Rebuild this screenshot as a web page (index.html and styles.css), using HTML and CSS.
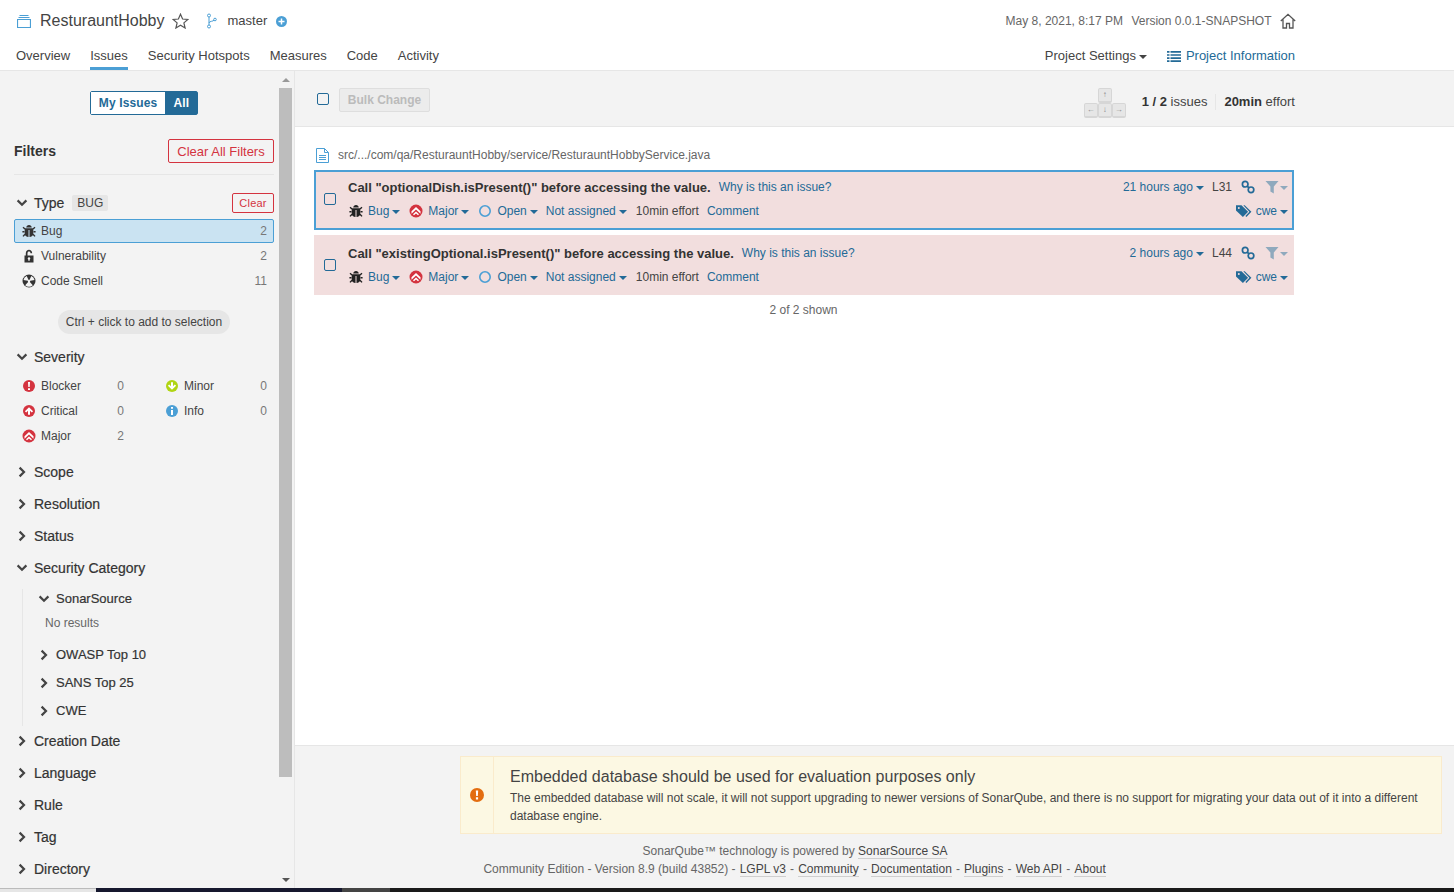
FILE: index.html
```html
<!DOCTYPE html>
<html lang="en">
<head>
<meta charset="utf-8">
<title>ResturauntHobby</title>
<link rel="stylesheet" href="styles.css">
</head>
<body>
<svg class="defs" width="0" height="0" aria-hidden="true">
  <defs>
    <symbol id="bug" viewBox="0 0 14 14"><path d="M4.200 3.400C4.400 1.900 5.500 1 7 1s2.600.9 2.800 2.400zM3.600 4.300h6.800c.5 0 .9.4.9.9v4.600C11.300 11.600 9.600 13 7.500 13V6h-1v7c-2.100 0-3.800-1.400-3.800-3.200V5.200c0-.5.4-.9.9-.9z" fill="currentColor"/><path d="M3 5 1 3.200M11 5l2-1.800M2.500 7.700H.4M11.500 7.700h2.100M3 10.200 1 12.400M11 10.200l2 2.200" stroke="currentColor" stroke-width="1.400" fill="none"/></symbol>
    <symbol id="major" viewBox="0 0 14 14"><circle cx="7" cy="7" r="6.500" fill="#d4333f"/><path d="M2.500 7.300 7 3l4.500 4.300v2.400L7 5.600 2.500 9.700z" fill="#fff"/><path d="M4 10.300 7 7.500l3 2.800-1 1L7 9.500l-2 1.800z" fill="#fff"/></symbol>
    <symbol id="caret" viewBox="0 0 8 4"><path d="M0 0h8L4 4z" fill="currentColor"/></symbol>
    <symbol id="open" viewBox="0 0 14 14"><circle cx="7" cy="7" r="5.200" fill="none" stroke="#4b9fd5" stroke-width="1.600"/></symbol>
    <symbol id="chev-d" viewBox="0 0 12 12"><path d="M1.600 3.400 6 7.800l4.400-4.400" fill="none" stroke="currentColor" stroke-width="2.200"/></symbol>
    <symbol id="chev-r" viewBox="0 0 12 12"><path d="M3.600 1.600 8 6l-4.400 4.400" fill="none" stroke="currentColor" stroke-width="2.200"/></symbol>
    <symbol id="link" viewBox="0 0 14 14"><g fill="none" stroke="#236a97" stroke-width="1.700"><circle cx="4.200" cy="4.200" r="2.800"/><circle cx="10" cy="9.800" r="2.800"/><path d="M6 6l2.200 2"/></g></symbol>
    <symbol id="filter" viewBox="0 0 14 14"><path d="M.5 1h13L8.800 6.600V13.500l-3.400-2V6.600z" fill="#8fa9bd"/></symbol>
    <symbol id="tag" viewBox="0 0 16 14"><path d="M0 1.300h5.500l6.600 6.500-5.200 5.200L0 6.600z" fill="#236a97"/><path d="M7.300 1.300h1.400l6.700 6.500-5 5.200-1-1 4-4.200z" fill="#236a97"/><circle cx="2.800" cy="4" r="1" fill="#f2dede"/></symbol>
  </defs>
</svg>

<header class="topbar">
  <div class="bar-row bar-main">
    <div class="crumbs">
      <svg class="ico-project" width="14" height="13" viewBox="0 0 14 13"><path d="M2.500.5h9M1.500 2.500h11M.5 4.500h13v8H.5z" fill="none" stroke="#4b9fd5" stroke-width="1.200"/></svg>
      <span class="project-name">ResturauntHobby</span>
      <svg class="ico-star" width="17" height="16" viewBox="0 0 17 16"><path d="M8.500 1.200 10.600 6l5.200.5-3.900 3.400 1.200 5.100-4.600-2.700L3.900 15l1.200-5.100L1.200 6.500l5.200-.5z" fill="none" stroke="#555" stroke-width="1.200"/></svg>
      <svg class="ico-branch" width="12" height="16" viewBox="0 0 12 16"><g fill="none" stroke="#4b9fd5"><circle cx="3" cy="2.500" r="1.500"/><circle cx="3" cy="13.500" r="1.500"/><circle cx="9" cy="6.500" r="1.300"/><path d="M3 4v8M3 10c0-2 4.500-1.500 5-2.800"/></g></svg>
      <span class="branch">master</span>
      <svg class="ico-plus" width="11" height="11" viewBox="0 0 11 11"><circle cx="5.500" cy="5.500" r="5.500" fill="#4b9fd5"/><path d="M2.500 5.500h6M5.500 2.500v6" stroke="#fff" stroke-width="1.500"/></svg>
    </div>
    <div class="meta">
      <span>May 8, 2021, 8:17 PM</span>
      <span>Version 0.0.1-SNAPSHOT</span>
      <svg class="ico-home" width="16" height="16" viewBox="0 0 16 16"><path d="M.8 8 8 1.300 15.200 8M3 6.500V15h3.500v-4.500h3V15H13V6.500" fill="none" stroke="#555" stroke-width="1.300"/></svg>
    </div>
  </div>
  <nav class="bar-row bar-nav">
    <div class="tabs">
      <a class="tab">Overview</a>
      <a class="tab is-active">Issues</a>
      <a class="tab">Security Hotspots</a>
      <a class="tab">Measures</a>
      <a class="tab">Code</a>
      <a class="tab">Activity</a>
    </div>
    <div class="nav-right">
      <a class="settings">Project Settings<svg class="caret" width="8" height="4"><use href="#caret"/></svg></a>
      <a class="info"><svg width="14" height="11" viewBox="0 0 14 11"><path d="M0 .9h2.500M3.500 .9H14M0 4h2.500M3.500 4H14M0 7.100h2.500M3.500 7.100H14M0 10.200h2.500M3.500 10.200H14" stroke="#236a97" stroke-width="1.700"/></svg>Project Information</a>
    </div>
  </nav>
</header>

<div class="layout">
  <aside class="sidebar">
    <div class="side-scroll">
      <div class="toggle-wrap"><div class="toggle"><span class="toggle-off">My Issues</span><span class="toggle-on">All</span></div></div>
      <div class="filters-head"><h2>Filters</h2><button class="btn-red btn-big">Clear All Filters</button></div>

      <section class="facet facet-type">
        <div class="facet-head"><svg class="chev"><use href="#chev-d"/></svg><span class="facet-title">Type</span><span class="pill">BUG</span><button class="btn-red btn-small">Clear</button></div>
        <div class="row is-selected"><svg class="row-ico" width="14" height="14"><use href="#bug"/></svg><span class="row-label">Bug</span><span class="row-count">2</span></div>
        <div class="row"><svg class="row-ico" width="14" height="14" viewBox="0 0 14 14"><path d="M2.500 6.500h9v7h-9zM3.800 6.500V4.300C3.800 2 5.300.8 7 .8s3.200 1.200 3.200 3.500H8.500C8.500 3 7.800 2.500 7 2.500S5.500 3 5.500 4.300v2.200z" fill="#333"/><circle cx="7" cy="9.500" r="1.200" fill="#f3f3f3"/><path d="M6.500 10h1v2h-1z" fill="#f3f3f3"/></svg><span class="row-label">Vulnerability</span><span class="row-count">2</span></div>
        <div class="row"><svg class="row-ico" width="14" height="14" viewBox="0 0 14 14"><circle cx="7" cy="7" r="6.500" fill="#333"/><path d="M7 7 3.200 2.800A5.500 5.500 0 0 1 10.800 2.800zM7 7l-5.500 1a5.500 5.500 0 0 0 3.200 3.900zM7 7l5.500 1a5.500 5.500 0 0 1-3.200 3.900z" fill="#f3f3f3" transform="rotate(180 7 7)"/><circle cx="7" cy="7" r="1.200" fill="#f3f3f3"/></svg><span class="row-label">Code Smell</span><span class="row-count">11</span></div>
        <div class="hint-wrap"><span class="hint">Ctrl + click to add to selection</span></div>
      </section>

      <section class="facet">
        <div class="facet-head"><svg class="chev"><use href="#chev-d"/></svg><span class="facet-title">Severity</span></div>
        <div class="sev-grid">
          <div class="row"><svg class="row-ico" width="14" height="14" viewBox="0 0 14 14"><circle cx="7" cy="7" r="6" fill="#d4333f"/><path d="M6 3h2l-.3 5H6.300zM6 9.200h2V11H6z" fill="#fff"/></svg><span class="row-label">Blocker</span><span class="row-count">0</span></div>
          <div class="row"><svg class="row-ico" width="14" height="14" viewBox="0 0 14 14"><circle cx="7" cy="7" r="6" fill="#b0d513"/><path d="M7 10.800 2.900 6.700l1.300-1.300L6 7.200V3.200h2v4l1.800-1.800 1.300 1.300z" fill="#fff"/></svg><span class="row-label">Minor</span><span class="row-count">0</span></div>
          <div class="row"><svg class="row-ico" width="14" height="14" viewBox="0 0 14 14"><circle cx="7" cy="7" r="6" fill="#d4333f"/><path d="M7 3.200 2.900 7.300l1.300 1.300L6 6.800v4h2v-4l1.800 1.800 1.300-1.300z" fill="#fff"/></svg><span class="row-label">Critical</span><span class="row-count">0</span></div>
          <div class="row"><svg class="row-ico" width="14" height="14" viewBox="0 0 14 14"><circle cx="7" cy="7" r="6" fill="#4b9fd5"/><path d="M6 3h2v1.800H6zM6 6h2v5H6z" fill="#fff"/></svg><span class="row-label">Info</span><span class="row-count">0</span></div>
          <div class="row"><svg class="row-ico" width="14" height="14"><use href="#major"/></svg><span class="row-label">Major</span><span class="row-count">2</span></div>
        </div>
      </section>

      <section class="facet-closed"><svg class="chev"><use href="#chev-r"/></svg><span class="facet-title">Scope</span></section>
      <section class="facet-closed"><svg class="chev"><use href="#chev-r"/></svg><span class="facet-title">Resolution</span></section>
      <section class="facet-closed"><svg class="chev"><use href="#chev-r"/></svg><span class="facet-title">Status</span></section>

      <section class="facet-sec">
        <div class="facet-closed"><svg class="chev"><use href="#chev-d"/></svg><span class="facet-title">Security Category</span></div>
        <div class="sub-list">
          <div class="sub-head"><svg class="chev"><use href="#chev-d"/></svg><span class="facet-title">SonarSource</span></div>
          <div class="no-results">No results</div>
          <div class="sub-head"><svg class="chev"><use href="#chev-r"/></svg><span class="facet-title">OWASP Top 10</span></div>
          <div class="sub-head"><svg class="chev"><use href="#chev-r"/></svg><span class="facet-title">SANS Top 25</span></div>
          <div class="sub-head"><svg class="chev"><use href="#chev-r"/></svg><span class="facet-title">CWE</span></div>
        </div>
      </section>

      <section class="facet-closed"><svg class="chev"><use href="#chev-r"/></svg><span class="facet-title">Creation Date</span></section>
      <section class="facet-closed"><svg class="chev"><use href="#chev-r"/></svg><span class="facet-title">Language</span></section>
      <section class="facet-closed"><svg class="chev"><use href="#chev-r"/></svg><span class="facet-title">Rule</span></section>
      <section class="facet-closed"><svg class="chev"><use href="#chev-r"/></svg><span class="facet-title">Tag</span></section>
      <section class="facet-closed"><svg class="chev"><use href="#chev-r"/></svg><span class="facet-title">Directory</span></section>
    </div>
    <div class="scrollbar"><span class="sb-up"></span><span class="sb-thumb"></span><span class="sb-down"></span></div>
  </aside>

  <main class="main">
    <div class="toolbar">
      <span class="check check-tool"></span>
      <button class="bulk">Bulk Change</button>
      <div class="toolbar-right">
        <div class="keys">
          <span class="key key-up">↑</span>
          <span class="key-row"><span class="key">←</span><span class="key">↓</span><span class="key">→</span></span>
        </div>
        <span class="paging"><b>1 / 2</b> issues</span>
        <span class="effort"><b>20min</b> effort</span>
      </div>
    </div>

    <div class="content">
      <div class="file-line">
        <svg width="13" height="15" viewBox="0 0 13 15"><path d="M.5.500h8l4 4v10H.500zM8.500.500v4h4M3 7.500h7M3 9.500h7M3 11.500h7" fill="none" stroke="#4b9fd5"/></svg>
        <span>src/.../com/qa/ResturauntHobby/service/ResturauntHobbyService.java</span>
      </div>

      <article class="issue is-current">
        <span class="check"></span>
        <div class="issue-body">
          <div class="issue-line">
            <span class="msg">Call "optionalDish.isPresent()" before accessing the value.</span>
            <a class="why">Why is this an issue?</a>
            <span class="issue-right">
              <a class="ago">21 hours ago<svg class="caret" width="8" height="4"><use href="#caret"/></svg></a>
              <span class="lnum">L31</span>
              <svg class="i-link" width="14" height="14"><use href="#link"/></svg>
              <span class="filt"><svg width="14" height="14"><use href="#filter"/></svg><svg class="caret caret-pale" width="8" height="4"><use href="#caret"/></svg></span>
            </span>
          </div>
          <div class="issue-line line-two">
            <span class="attr"><svg class="attr-bug" width="14" height="14"><use href="#bug"/></svg><a>Bug<svg class="caret" width="8" height="4"><use href="#caret"/></svg></a></span>
            <span class="attr"><svg width="14" height="14"><use href="#major"/></svg><a>Major<svg class="caret" width="8" height="4"><use href="#caret"/></svg></a></span>
            <span class="attr attr-o"><svg width="14" height="14"><use href="#open"/></svg><a>Open<svg class="caret" width="8" height="4"><use href="#caret"/></svg></a></span>
            <span class="attr"><a>Not assigned<svg class="caret" width="8" height="4"><use href="#caret"/></svg></a></span>
            <span class="attr plain">10min effort</span>
            <span class="attr"><a>Comment</a></span>
            <span class="issue-right"><svg width="16" height="14"><use href="#tag"/></svg><a class="cwe">cwe<svg class="caret" width="8" height="4"><use href="#caret"/></svg></a></span>
          </div>
        </div>
      </article>

      <article class="issue">
        <span class="check"></span>
        <div class="issue-body">
          <div class="issue-line">
            <span class="msg">Call "existingOptional.isPresent()" before accessing the value.</span>
            <a class="why">Why is this an issue?</a>
            <span class="issue-right">
              <a class="ago">2 hours ago<svg class="caret" width="8" height="4"><use href="#caret"/></svg></a>
              <span class="lnum">L44</span>
              <svg class="i-link" width="14" height="14"><use href="#link"/></svg>
              <span class="filt"><svg width="14" height="14"><use href="#filter"/></svg><svg class="caret caret-pale" width="8" height="4"><use href="#caret"/></svg></span>
            </span>
          </div>
          <div class="issue-line line-two">
            <span class="attr"><svg class="attr-bug" width="14" height="14"><use href="#bug"/></svg><a>Bug<svg class="caret" width="8" height="4"><use href="#caret"/></svg></a></span>
            <span class="attr"><svg width="14" height="14"><use href="#major"/></svg><a>Major<svg class="caret" width="8" height="4"><use href="#caret"/></svg></a></span>
            <span class="attr attr-o"><svg width="14" height="14"><use href="#open"/></svg><a>Open<svg class="caret" width="8" height="4"><use href="#caret"/></svg></a></span>
            <span class="attr"><a>Not assigned<svg class="caret" width="8" height="4"><use href="#caret"/></svg></a></span>
            <span class="attr plain">10min effort</span>
            <span class="attr"><a>Comment</a></span>
            <span class="issue-right"><svg width="16" height="14"><use href="#tag"/></svg><a class="cwe">cwe<svg class="caret" width="8" height="4"><use href="#caret"/></svg></a></span>
          </div>
        </div>
      </article>
      <div class="shown">2 of 2 shown</div>
    </div>

    <footer class="foot">
      <div class="warn">
        <div class="warn-ico"><svg width="14" height="14" viewBox="0 0 14 14"><circle cx="7" cy="7" r="7" fill="#e36d10"/><path d="M5.800 2.500h2.400l-.4 5.500H6.200zM5.900 9.300h2.200v2.200H5.900z" fill="#fff"/></svg></div>
        <div class="warn-text">
          <h3>Embedded database should be used for evaluation purposes only</h3>
          <p>The embedded database will not scale, it will not support upgrading to newer versions of SonarQube, and there is no support for migrating your data out of it into a different database engine.</p>
        </div>
      </div>
      <div class="foot-line foot-first">SonarQube™ technology is powered by <a>SonarSource SA</a></div>
      <div class="foot-line foot-links">Community Edition - Version 8.9 (build 43852) - <a>LGPL v3</a> - <a>Community</a> - <a>Documentation</a> - <a>Plugins</a> - <a>Web API</a> - <a>About</a></div>
    </footer>
  </main>
</div>

<div class="taskbar"><span class="tb-light"></span><span class="tb-a"></span><span class="tb-b"></span><span class="tb-c"></span></div>
</body>
</html>
```
FILE: styles.css
```css
* { box-sizing: border-box; }
html, body { margin: 0; height: 100%; overflow: hidden; }
body { width: 1454px; height: 892px; display: flex; flex-direction: column; font: 12px/16px "Liberation Sans", Arial, sans-serif; color: #444; background: #fff; }
.defs { position: absolute; }
a { color: inherit; }
button { font-family: inherit; }
svg { flex: none; display: block; }

.topbar { height: 71px; flex: none; background: #fff; border-bottom: 1px solid #e6e6e6; padding-right: 159px; padding-left: 16px; }
.bar-row { display: flex; align-items: center; justify-content: space-between; }
.bar-main { height: 42px; }
.crumbs { display: flex; align-items: center; }
.ico-project { margin-left: 1px; }
.project-name { font-size: 16px; color: #444; margin-left: 9px; }
.ico-star { margin-left: 7px; }
.ico-branch { margin-left: 17px; }
.branch { margin-left: 10px; font-size: 13px; color: #444; }
.ico-plus { margin-left: 9px; }
.meta { display: flex; align-items: center; gap: 8.5px; color: #666; margin-right: -1px; }
.bar-nav { height: 28px; align-items: stretch; }
.tabs { display: flex; gap: 20px; }
.tab { font-size: 13px; color: #444; padding-top: 6px; border-bottom: 3px solid transparent; height: 28px; }
.tab.is-active { border-bottom-color: #4b9fd5; }
.nav-right { display: flex; gap: 20px; padding-top: 6px; font-size: 13px; }
.settings { display: flex; align-items: center; height: 16px; }
.info { display: flex; align-items: center; gap: 5px; height: 16px; color: #236a97; }
.caret { margin-left: 3px; margin-top: 1px; display: inline-block; vertical-align: middle; }

.layout { flex: 1; min-height: 0; display: flex; }
.sidebar { width: 295px; flex: none; display: flex; background: #f3f3f3; border-right: 1px solid #e6e6e6; }
.side-scroll { width: 279px; padding: 20px 5px 0 14px; overflow: hidden; }
.scrollbar { width: 14px; display: flex; flex-direction: column; align-items: flex-start; }
.sb-up { margin: 7px 0 0 3px; border: 4px solid transparent; border-top: 0; border-bottom-color: #999; }
.sb-thumb { display: block; width: 13px; height: 689px; background: #bdbdbd; margin-top: 6px; }
.sb-down { margin: auto 0 6px 3px; border: 4px solid transparent; border-bottom: 0; border-top-color: #555; }

.toggle-wrap { display: flex; justify-content: center; }
.toggle { display: flex; height: 24px; border: 1px solid #236a97; border-radius: 2px; font-weight: 700; line-height: 22px; letter-spacing: .15px; }
.toggle-off { background: #fff; color: #236a97; padding: 0 8px; }
.toggle-on { background: #236a97; color: #fff; padding: 0 8px; }
.filters-head { display: flex; align-items: center; justify-content: space-between; margin-top: 24px; padding-bottom: 11px; border-bottom: 1px solid #e6e6e6; }
.filters-head h2 { margin: 0; font-size: 14px; line-height: 24px; font-weight: 700; color: #333; }
.btn-red { background: transparent; border: 1px solid #d4333f; border-radius: 2px; color: #d4333f; font-size: 12px; padding: 0; }
.btn-big { width: 106px; height: 24px; font-size: 13px; }
.btn-small { width: 42px; height: 20px; font-size: 11px; margin-left: auto; letter-spacing: .2px; }

.facet-type { margin-top: 18px; }
.facet-head { display: flex; align-items: center; height: 20px; }
.chev { width: 12px; height: 12px; margin: 0 6px 0 2px; color: #444; }
.facet-title { font-size: 14px; color: #333; -webkit-text-stroke: .2px #333; }
.pill { background: #e6e6e6; border-radius: 2px; font-size: 12px; line-height: 16px; padding: 0 5px; margin-left: 8px; color: #444; }
.row { display: flex; align-items: center; height: 24px; padding: 0 6px 0 7px; margin-top: 1px; border: 1px solid transparent; border-radius: 2px; }
.facet-head + .row { margin-top: 6px; }
.row.is-selected { background: #cae3f2; border-color: #4b9fd5; }
.row-ico { margin-right: 5px; color: #333; margin-left: 0; }
.row-label { flex: 1; }
.row-count { color: #777; }
.hint-wrap { display: flex; justify-content: center; margin-top: 17px; }
.hint { background: #e6e6e6; border-radius: 12px; padding: 0 8px; line-height: 24px; }
.facet-type + .facet { margin-top: 13px; }
.sev-grid { display: grid; grid-template-columns: 117px 117px; column-gap: 26px; margin-top: 6px; }
.facet-closed { display: flex; align-items: center; height: 20px; margin-top: 12px; }
.facet + .facet-closed { margin-top: 14px; }
.facet-sec > .facet-closed { margin-top: 12px; }
.facet-sec + .facet-closed { margin-top: 5px; }
.sub-list { margin: 11px 0 0 8px; border-left: 1px solid #e6e6e6; padding: 0 0 5px 13px; }
.sub-head { display: flex; align-items: center; height: 20px; }
.sub-head + .sub-head { margin-top: 8px; }
.sub-head .chev { margin-right: 6px; }
.sub-head .facet-title { font-size: 13px; }
.no-results { margin: 6px 0 14px 9px; color: #666; line-height: 16px; }

.main { flex: 1; min-width: 0; display: flex; flex-direction: column; }
.toolbar { height: 56px; flex: none; background: #f3f3f3; border-bottom: 1px solid #e6e6e6; display: flex; align-items: flex-start; padding: 17px 159px 0 22px; }
.check { display: block; flex: none; width: 12px; height: 12px; border: 1px solid #236a97; border-radius: 2px; background: transparent; }
.check-tool { margin-top: 5px; }
.bulk { margin-left: 10px; width: 91px; height: 24px; background: #ececec; border: 1px solid #dedede; border-radius: 2px; color: #bbb; font-size: 12px; font-weight: 700; padding: 0; }
.toolbar-right { margin-left: auto; display: flex; align-items: flex-start; }
.keys { display: flex; flex-direction: column; align-items: center; margin-right: 16px; }
.key { width: 14px; height: 15px; background: #e6e6e6; border: 1px solid #d6d6d6; border-bottom-width: 2px; border-radius: 2px; font-size: 8px; line-height: 11px; color: #888; text-align: center; display: block; }
.key-row { display: flex; }
.paging { margin-top: 6px; padding-right: 8px; font-size: 13px; color: #444; border-right: 1px solid #e6e6e6; line-height: 16px; }
.paging b, .effort b { color: #333; }
.effort { margin-top: 6px; margin-left: 8px; font-size: 13px; }

.content { flex: 1; background: #fff; padding: 20px 160px 0 19px; }
.file-line { display: flex; align-items: center; gap: 9px; padding-left: 2px; height: 16px; color: #666; }
.issue { display: flex; align-items: center; height: 60px; margin-top: 6px; background: #f2dede; padding-left: 10px; color: #444; }
.is-current { border: 2px solid #4b9fd5; padding-left: 8px; padding-bottom: 2px; margin-top: 7px; }
.is-current + .issue { margin-top: 5px; }
.issue > .check { width: 12px; height: 12px; }
.issue-body { flex: 1; min-width: 0; margin-left: 12px; padding-right: 6px; }
.is-current .issue-body { padding-right: 4px; }
.issue-line { display: flex; align-items: center; height: 16px; }
.line-two { margin-top: 8px; }
.msg { font-size: 13px; font-weight: 700; color: #333; padding-top: 2px; }
.why { margin-left: 8px; color: #236a97; }
.issue-right { margin-left: auto; display: flex; align-items: center; color: #236a97; }
.attr { display: flex; align-items: center; gap: 5px; color: #236a97; margin-right: 9px; }
.attr-o { margin-right: 8px; }
.attr a { display: flex; align-items: center; }
.attr-bug { color: #222; margin-left: 1px; }
.plain { color: #444; margin-right: 8px; }
.lnum { color: #444; margin-left: 8px; }
.i-link { margin-left: 9px; }
.filt { display: flex; align-items: center; margin-left: 10px; }
.caret-pale { color: #8fa9bd; margin-left: 1px; }
.ago, .cwe { display: flex; align-items: center; }
.cwe { margin-left: 4px; }
.shown { margin-top: 7px; text-align: center; height: 16px; color: #666; width: 979px; }

.foot { height: 143px; flex: none; background: #f3f3f3; border-top: 1px solid #e6e6e6; padding: 10px 12px 0 165px; }
.warn { display: flex; height: 78px; background: #fcf8e3; border: 1px solid #faebcc; }
.warn-ico { width: 33px; flex: none; display: flex; align-items: center; justify-content: center; border-right: 1px solid #faebcc; }
.warn-text { padding: 10px 16px 0 16px; flex: 1; min-width: 0; color: #444; }
.warn-text h3 { margin: 0; font-size: 16px; line-height: 20px; font-weight: 400; color: #444; }
.warn-text p { margin: 2px 0 0; line-height: 18px; }
.foot-line { text-align: center; height: 18px; line-height: 18px; color: #666; margin: 0 147px 0 -165px; }
.foot-first { margin-top: 8px; }
.foot-line a { color: #444; border-bottom: 1px solid #cfcfcf; }
.foot-links a { margin: 0 .8px; }

.taskbar { height: 4px; flex: none; display: flex; background: #16161d; }
.tb-light { width: 96px; background: #e6e6e6; border-top: 1px solid #bbb; }
.tb-a { width: 246px; background: #16182e; }
.tb-b { width: 48px; background: #444; }
.tb-c { flex: 1; background: #1a1a1a; }
```
